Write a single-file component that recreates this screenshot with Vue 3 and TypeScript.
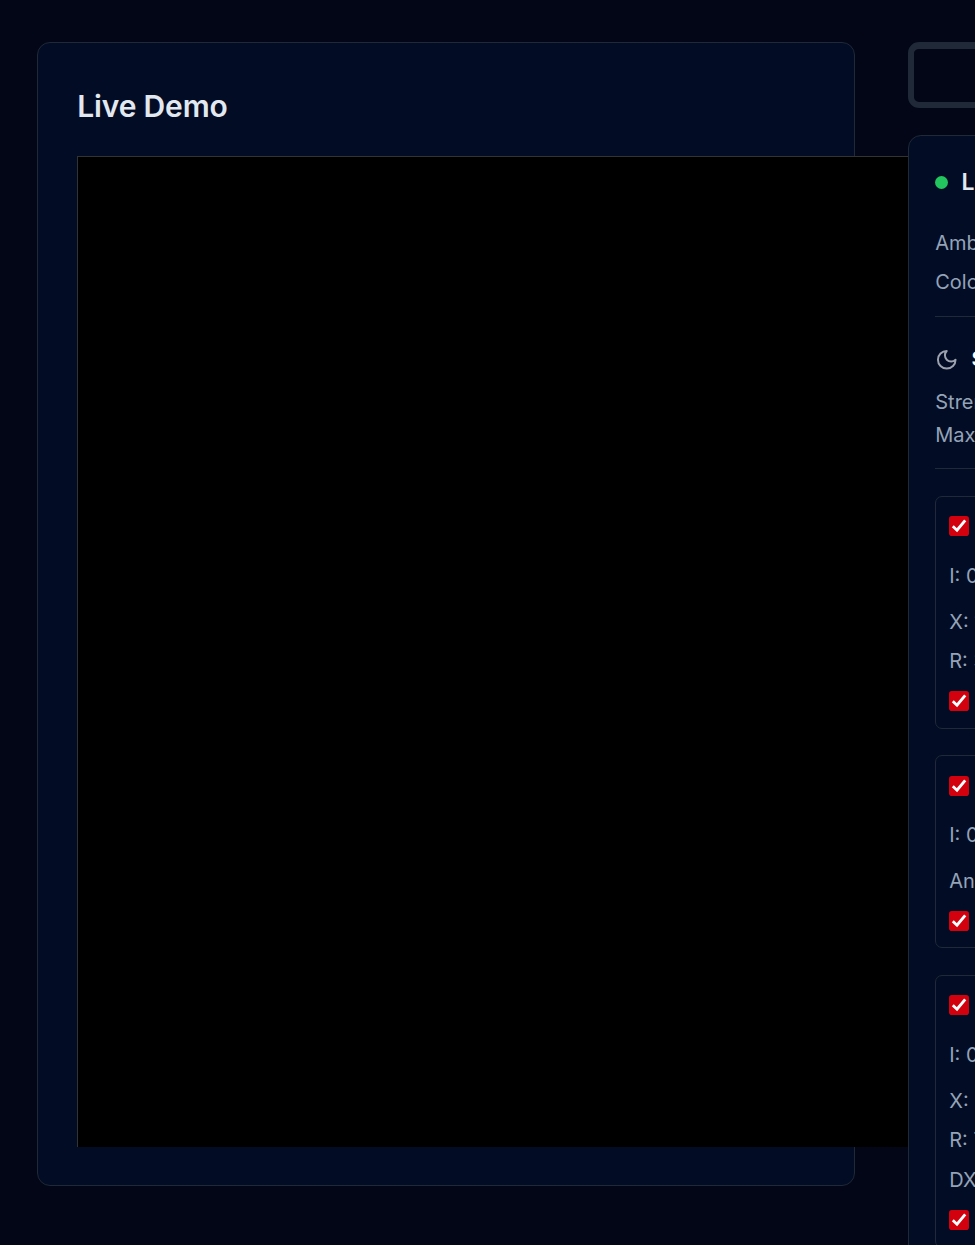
<script setup lang="ts">
interface Light {
  name: string
  rows: string[]
}

const lights: Light[] = [
  { name: 'Light 1', rows: ['I: 0.8', 'X: 100', 'R: 300'] },
  { name: 'Light 2', rows: ['I: 0.5', 'Angle: 45'] },
  { name: 'Light 3', rows: ['I: 0.7', 'X: 400', 'R: 700', 'DX: 1'] },
]
</script>

<template>
  <main class="page">
    <section class="demo">
      <h2>Live Demo</h2>
      <div class="canvas"></div>
    </section>
    <aside class="side">
      <div class="field"></div>
      <div class="panel">
        <header class="title"><i class="dot"></i><span>Live Lights</span></header>
        <p class="row ambient">Ambient</p>
        <p class="row color">Color</p>
        <hr />
        <div class="shadow-title">
          <svg viewBox="0 0 24 24" fill="none" stroke="currentColor" stroke-width="2" stroke-linecap="round" stroke-linejoin="round">
            <path d="M12 3a6 6 0 0 0 9 9 9 9 0 1 1-9-9Z" />
          </svg>
          <span>Shadows</span>
        </div>
        <p class="row">Strength</p>
        <p class="row max">Max length</p>
        <hr class="second" />
        <article v-for="light in lights" :key="light.name" class="light">
          <div class="row toggle">
            <svg class="check" viewBox="0 0 20 20"><rect width="20" height="20" rx="2.8" /><path d="M3.8 10.3 8 14.2 16.2 4.4" /></svg>
            <span>{{ light.name }}</span>
          </div>
          <p v-for="text in light.rows" :key="text" class="row">{{ text }}</p>
          <div class="row toggle shadow">
            <svg class="check" viewBox="0 0 20 20"><rect width="20" height="20" rx="2.8" /><path d="M3.8 10.3 8 14.2 16.2 4.4" /></svg>
            <span>Shadows</span>
          </div>
        </article>
      </div>
    </aside>
  </main>
</template>

<style>
html,
body {
  background: #020617;
  overflow: hidden;
}
</style>

<style scoped>
* {
  box-sizing: border-box;
}
.page {
  display: flex;
  align-items: flex-start;
  gap: 53px;
  width: 975px;
  height: 1245px;
  padding: 42px 0 0 37px;
  overflow: hidden;
  color: #94a3b8;
  font: 20px/30px Inter, sans-serif;
  white-space: nowrap;
}
.demo {
  flex: 0 0 818px;
  min-width: 0;
  height: 1144px;
  padding: 43px 39px;
  border: 1px solid #1f2937;
  border-radius: 13px;
  background: #020c24;
}
h2 {
  margin: 0 0 30px;
  padding-left: 0.3px;
  color: #e2e8f0;
  font-size: 30px;
  font-weight: 600;
  letter-spacing: -0.17px;
  line-height: 40px;
}
.canvas {
  width: 1320px;
  height: 991px;
  border: solid #333;
  border-width: 1px 0 0 1px;
  background: #000;
}
.side {
  position: relative;
  flex: 0 0 400px;
}
.field {
  height: 66px;
  margin-bottom: 27px;
  border: 6px solid #1f2937;
  border-top-width: 7px;
  border-radius: 11px;
}
.panel {
  height: 1300px;
  padding: 31px 26px;
  border: 1px solid #1f2937;
  border-radius: 13px;
  background: #020c24;
}
p,
hr {
  margin: 0;
}
p {
  padding-left: 0.25px;
}
.title,
.shadow-title {
  display: flex;
  align-items: center;
  height: 30px;
  color: #e2e8f0;
  font-weight: 600;
}
.title {
  gap: 13.5px;
  font-size: 23px;
}
.dot {
  width: 13px;
  height: 13px;
  border-radius: 50%;
  background: #22c55e;
}
.row {
  height: 30px;
}
.ambient {
  margin-top: 31px;
}
.color {
  margin-top: 9px;
}
hr {
  height: 1px;
  margin-top: 19px;
  border: 0;
  background: #1f2937;
}
.shadow-title {
  gap: 13px;
  margin: 27px 0 13px;
  color: #fff;
}
.shadow-title svg {
  width: 23.5px;
  height: 23.5px;
  margin-top: 1px;
  color: #9ca3af;
}
.max {
  margin-top: 3px;
}
.second {
  margin-top: 18px;
}
.light {
  margin-top: 26px;
  padding: 14px 13px 12px;
  border: 1px solid #1f2937;
  border-radius: 7px;
}
.second + .light {
  margin-top: 27px;
}
.toggle {
  display: flex;
  align-items: center;
  gap: 11px;
}
.check {
  flex: none;
  width: 20px;
  height: 20px;
}
.check rect {
  fill: #d3000d;
}
.check path {
  fill: none;
  stroke: #fff;
  stroke-width: 2.9;
}
.light p {
  margin-top: 9px;
}
.light .toggle + p {
  margin-top: 20px;
}
.light .toggle + p + p {
  margin-top: 16px;
}
.light .shadow {
  margin-top: 10px;
}
.light:nth-of-type(2) {
  padding: 15px 13px 11px;
}
.light:nth-of-type(2) .toggle + p {
  margin-top: 19px;
}
.light:nth-of-type(3) {
  margin-top: 27px;
}
.light:nth-of-type(3) p:nth-of-type(4) {
  margin-top: 10px;
}
</style>
